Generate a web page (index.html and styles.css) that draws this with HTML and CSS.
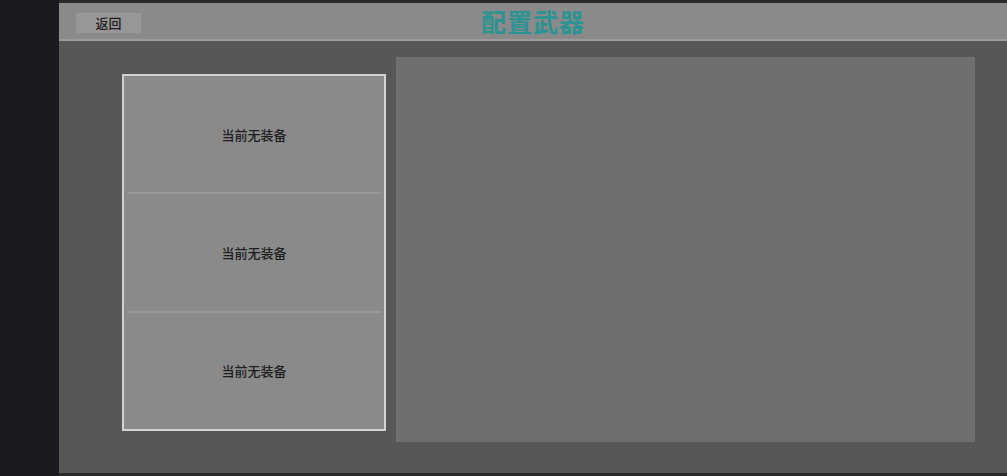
FILE: index.html
```html
<!DOCTYPE html>
<html lang="zh">
<head>
<meta charset="utf-8">
<title>配置武器</title>
<link rel="stylesheet" href="styles.css">
</head>
<body>
<div class="screen">
  <div class="sidebar"></div>
  <div class="app">
    <header class="header">
      <button class="back">返回</button>
      <h1 class="title">配置武器</h1>
    </header>
    <main class="main">
      <div class="slots">
        <div class="slot">当前无装备</div>
        <div class="slot">当前无装备</div>
        <div class="slot">当前无装备</div>
      </div>
      <div class="detail"></div>
    </main>
  </div>
</div>
</body>
</html>
```
FILE: styles.css
```css
*, *::before, *::after {
  box-sizing: border-box;
}
html, body {
  margin: 0;
  padding: 0;
  background: #1c1a20;
  font-family: "Noto Sans CJK SC", "Noto Sans", sans-serif;
}
.screen {
  display: flex;
  width: 1007px;
  height: 476px;
}
.sidebar {
  width: 59px;
  flex: none;
  background: #1c1a20;
}
.app {
  flex: 1;
  display: flex;
  flex-direction: column;
  padding: 3px 0 3px;
  background: #2a2a2a;
}
.header {
  position: relative;
  height: 38px;
  flex: none;
  background: #8a8a8a;
  border-bottom: 2px solid #9c9c9c;
  display: flex;
  align-items: center;
  justify-content: center;
}
.back {
  position: absolute;
  left: 17px;
  top: 10px;
  width: 65px;
  height: 20px;
  border: none;
  padding: 0;
  background: #979797;
  color: #1e1e1e;
  font-family: "Noto Sans CJK SC", sans-serif;
  font-size: 13px;
  font-weight: 500;
  line-height: 20px;
}
.title {
  margin: 0;
  font-size: 25px;
  font-weight: 700;
  color: #2a9393;
  line-height: 36px;
  letter-spacing: 1px;
}
.main {
  flex: 1;
  background: #575757;
  display: flex;
  align-items: flex-start;
  padding: 16px 0 0 63px;
  gap: 10px;
}
.slots {
  margin-top: 17px;
  width: 264px;
  height: 357px;
  border: 2px solid #d2d2d2;
  background: #8a8a8a;
  display: flex;
  flex-direction: column;
  padding: 0 3px;
}
.slot {
  flex: 1;
  display: flex;
  align-items: center;
  justify-content: center;
  font-size: 13px;
  font-weight: 500;
  color: #1e1e1e;
  border-bottom: 2px solid #979797;
}
.slot:last-child {
  border-bottom: none;
}
.detail {
  width: 579px;
  height: 385px;
  background: #6f6f6f;
}
```
